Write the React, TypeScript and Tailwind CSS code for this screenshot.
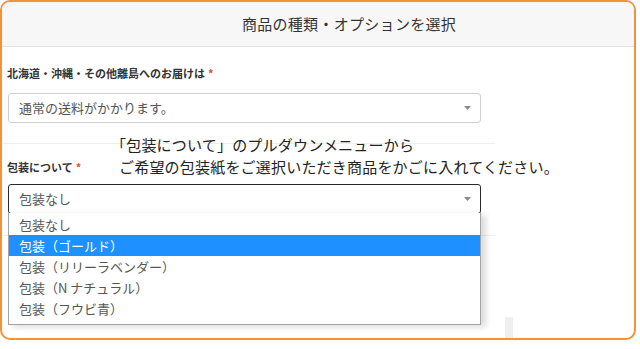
import React from 'react'

const options = ['包装なし', '包装（ゴールド）', '包装（リリーラベンダー）', '包装（N ナチュラル）', '包装（フウビ青）']

function Caret() {
  return (
    <svg width="7" height="4" viewBox="0 0 7 4" className="shrink-0">
      <path d="M0 0h7L3.5 4z" fill="#8a8a8a" />
    </svg>
  )
}

function Required() {
  return <span className="ml-[3px] text-[#e8473a]">*</span>
}

export default function App() {
  return (
    <div className="w-[640px] h-[349px] bg-white font-['Noto_Sans_CJK_JP','Noto_Sans',sans-serif] overflow-hidden">
      <div className="relative w-[636px] h-[340px] border-2 border-[#f39237] rounded-[10px] overflow-hidden bg-white">
        {/* header */}
        <div className="h-[45px] bg-[#f7f7f7] border-b border-[#e2e2e2] flex items-center justify-center pl-[62px] text-[15px] tracking-[0.3px] text-[#333]">
          商品の種類・オプションを選択
        </div>

        {/* form column */}
        <div className="w-[493px] flex flex-col">
          <div className="mt-[18px] pl-[5px] text-[11px] leading-[16px] font-bold text-[#333]">
            北海道・沖縄・その他離島へのお届けは<Required />
          </div>
          <div className="mt-[12px] ml-[6px] w-[473px] h-[30px] border border-[#cfcfcf] rounded-[3px] flex items-center justify-between pl-[10px] pr-[9px] text-[13px] text-[#555]">
            <span>通常の送料がかかります。</span>
            <Caret />
          </div>

          <div className="mt-[20px] h-px bg-[#eeeeee]" />

          <div className="mt-[15px] pl-[5px] text-[11px] leading-[16px] font-bold text-[#333]">
            包装について<Required />
          </div>
          <div className="relative mt-[9px] ml-[6px] w-[473px]">
            <div className="h-[30px] border border-[#2a2a2a] rounded-[3px] flex items-center justify-between pl-[10px] pr-[9px] text-[13px] text-[#555]">
              <span>包装なし</span>
              <Caret />
            </div>
            {/* open dropdown */}
            <ul className="absolute z-10 left-0 top-[29px] w-[473px] bg-white border border-t-0 border-[#a3a3a3] pt-px pb-[5px] shadow-[5px_2px_6px_rgba(0,0,0,0.14)] text-[13px]">
              {options.map((o, i) => (
                <li
                  key={o}
                  className={
                    i === 1
                      ? 'h-[21px] flex items-center pl-[10px] bg-[#1e90ff] text-white'
                      : 'h-[21px] flex items-center pl-[10px] text-[#555]'
                  }
                >
                  {o}
                </li>
              ))}
            </ul>
          </div>

          <div className="mt-[21px] h-px bg-[#eeeeee]" />
        </div>

        {/* annotation over the form */}
        <div className="absolute left-[117px] top-[132px] text-[15px] leading-[22px] tracking-[0.2px] text-[#222] whitespace-nowrap">
          <div className="-ml-[8px]">「包装について」のプルダウンメニューから</div>
          <div>ご希望の包装紙をご選択いただき商品をかごに入れてください。</div>
        </div>

        <div className="absolute left-[503px] top-[315px] w-[8px] h-[22px] bg-[#efefef]" />
      </div>
    </div>
  )
}
